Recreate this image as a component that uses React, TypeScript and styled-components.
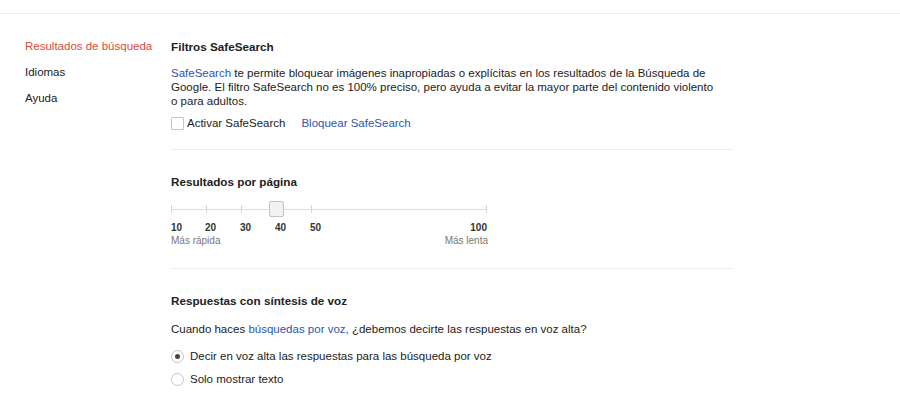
import React from 'react';
import styled, { createGlobalStyle } from 'styled-components';

const GlobalStyle = createGlobalStyle`
  html, body {
    margin: 0;
    padding: 0;
    background: #fff;
  }
  body {
    font-family: Arial, "Liberation Sans", sans-serif;
    font-size: 11.5px;
    color: #222;
  }
`;

const TopBar = styled.div`
  height: 13px;
  border-bottom: 1px solid #ebebeb;
`;

const Page = styled.div`
  display: flex;
  padding: 25px 0 0 25px;
`;

const SideNav = styled.nav`
  display: flex;
  flex-direction: column;
  width: 146px;
  gap: 11px;
`;

const NavItem = styled.a<{ $active?: boolean }>`
  font-size: 11.5px;
  line-height: 15px;
  color: ${(p) => (p.$active ? '#d9493a' : '#222')};
  text-decoration: none;
`;

const Content = styled.main`
  width: 562px;
`;

const Section = styled.section<{ $last?: boolean }>`
  padding-bottom: ${(p) => (p.$last ? '0' : '18px')};
  border-bottom: ${(p) => (p.$last ? 'none' : '1px solid #ebebeb')};
  margin-bottom: 24px;
`;

const Heading = styled.h2<{ $gap?: number }>`
  margin: 0 0 ${(p) => p.$gap ?? 12}px;
  font-size: 11.7px;
  line-height: 15px;
  font-weight: bold;
  color: #222;
`;

const Text = styled.p`
  margin: 0;
  width: 545px;
  line-height: 14px;
  color: #222;
`;

const Link = styled.a`
  color: #2a56b0;
  text-decoration: none;
`;

const CheckRow = styled.div`
  display: flex;
  align-items: center;
  margin-top: 8px;
  line-height: 15px;
`;

const Box = styled.span`
  width: 11px;
  height: 11px;
  border: 1px solid #c6c6c6;
  border-radius: 1px;
  margin-right: 3px;
  background: #fff;
`;

const CheckLabel = styled.span`
  margin-right: 16px;
`;

const SliderWrap = styled.div`
  position: relative;
  width: 318px;
  height: 53px;
`;

const Track = styled.div`
  position: absolute;
  left: 0;
  top: 12px;
  width: 316px;
  height: 1px;
  background: #dcdcdc;
`;

const Tick = styled.span`
  position: absolute;
  top: 8px;
  width: 1px;
  height: 8px;
  background: #d4d4d4;
`;

const Thumb = styled.span`
  position: absolute;
  top: 4px;
  width: 13px;
  height: 14px;
  border: 1px solid #c2c2c2;
  border-radius: 2px;
  background: #f1f1f1;
`;

const TickLabel = styled.span`
  position: absolute;
  top: 25px;
  font-size: 10px;
  line-height: 12px;
  font-weight: bold;
  color: #333;
`;

const SpeedLabel = styled.span<{ $right?: boolean }>`
  position: absolute;
  top: 38px;
  ${(p) => (p.$right ? 'right: 1px;' : 'left: 0;')}
  font-size: 10px;
  line-height: 12px;
  color: #777;
`;

const RadioList = styled.div`
  display: flex;
  flex-direction: column;
  gap: 8px;
  margin-top: 13px;
`;

const RadioRow = styled.label`
  display: flex;
  align-items: center;
  line-height: 15px;
`;

const Circle = styled.span<{ $checked?: boolean }>`
  box-sizing: border-box;
  width: 13px;
  height: 13px;
  border-radius: 50%;
  border: 1px solid #c6c6c6;
  margin-right: 6px;
  display: flex;
  align-items: center;
  justify-content: center;
  &::after {
    content: '';
    width: 5px;
    height: 5px;
    border-radius: 50%;
    background: ${(p) => (p.$checked ? '#444' : 'transparent')};
  }
`;

const stops = [10, 20, 30, 40, 50, 100];
const pos = (v: number) => (v - 10) * 3.5;

export default function App() {
  const value = 40;
  return (
    <>
      <GlobalStyle />
      <TopBar />
      <Page>
        <SideNav>
          <NavItem $active>Resultados de búsqueda</NavItem>
          <NavItem>Idiomas</NavItem>
          <NavItem>Ayuda</NavItem>
        </SideNav>
        <Content>
          <Section>
            <Heading>Filtros SafeSearch</Heading>
            <Text>
              <Link>SafeSearch</Link> te permite bloquear imágenes inapropiadas o explícitas en los
              resultados de la Búsqueda de Google. El filtro SafeSearch no es 100% preciso, pero ayuda
              a evitar la mayor parte del contenido violento o para adultos.
            </Text>
            <CheckRow>
              <Box />
              <CheckLabel>Activar SafeSearch</CheckLabel>
              <Link>Bloquear SafeSearch</Link>
            </CheckRow>
          </Section>
          <Section>
            <Heading $gap={8}>Resultados por página</Heading>
            <SliderWrap>
              <Track />
              {stops.map((s) => (
                <Tick key={s} style={{ left: pos(s) }} />
              ))}
              <Thumb style={{ left: pos(value) - 7 }} />
              {stops.map((s) => (
                <TickLabel
                  key={s}
                  style={s === 100 ? { right: 2 } : { left: s === 10 ? 0 : pos(s) - 1 }}
                >
                  {s}
                </TickLabel>
              ))}
              <SpeedLabel>Más rápida</SpeedLabel>
              <SpeedLabel $right>Más lenta</SpeedLabel>
            </SliderWrap>
          </Section>
          <Section $last>
            <Heading $gap={14}>Respuestas con síntesis de voz</Heading>
            <Text>
              Cuando haces <Link>búsquedas por voz,</Link> ¿debemos decirte las respuestas en voz alta?
            </Text>
            <RadioList>
              <RadioRow>
                <Circle $checked />
                Decir en voz alta las respuestas para las búsqueda por voz
              </RadioRow>
              <RadioRow>
                <Circle />
                Solo mostrar texto
              </RadioRow>
            </RadioList>
          </Section>
        </Content>
      </Page>
    </>
  );
}
